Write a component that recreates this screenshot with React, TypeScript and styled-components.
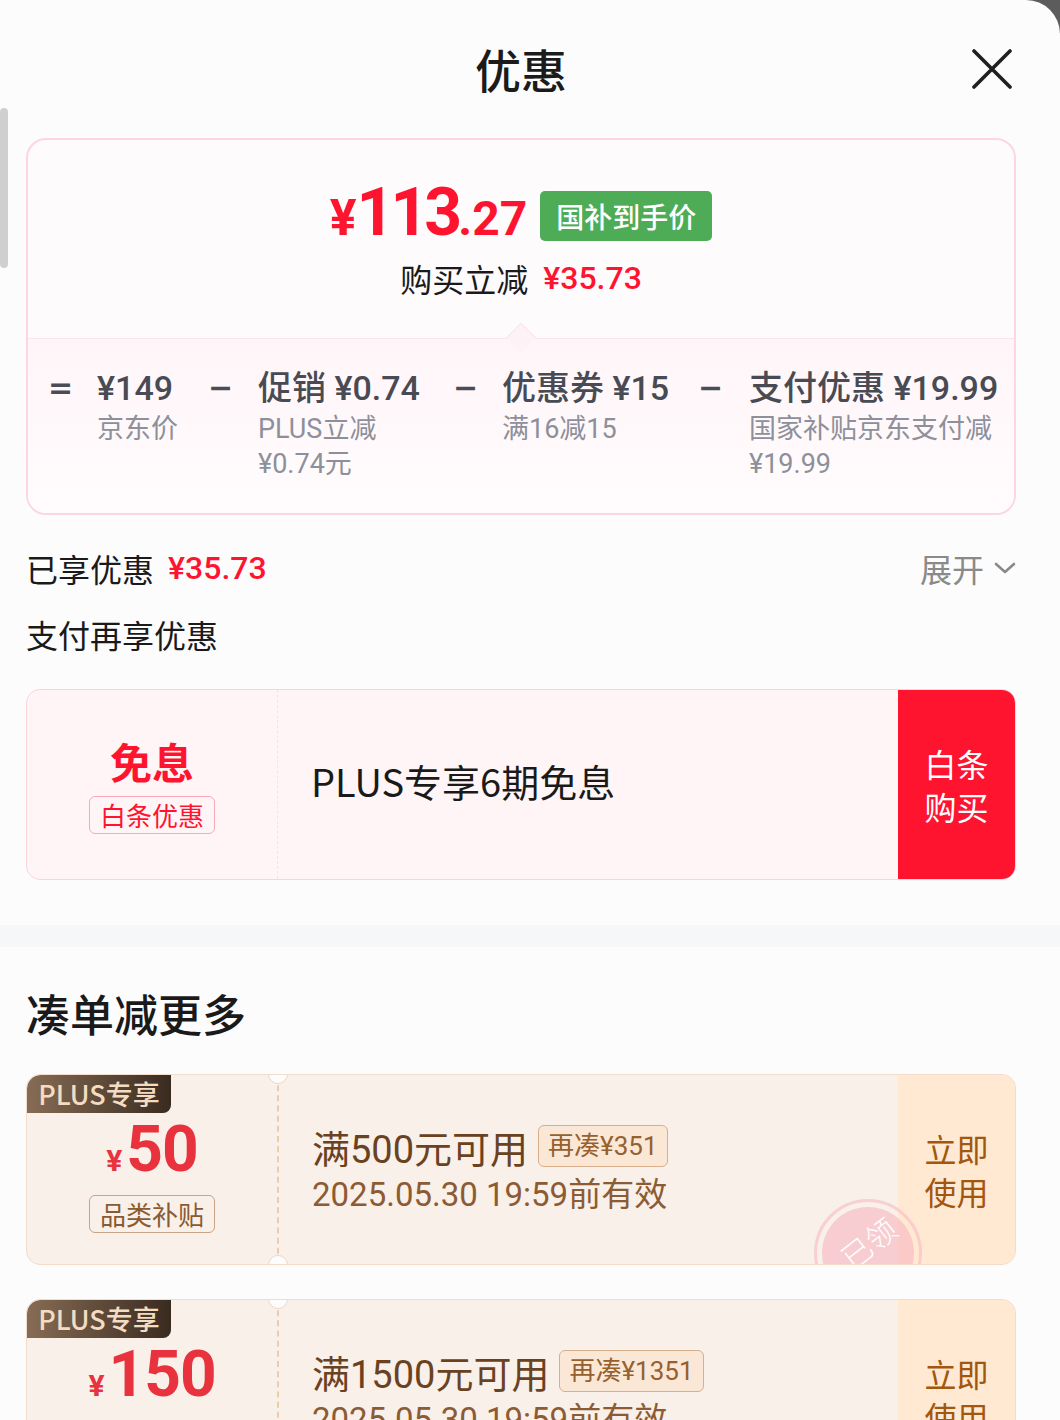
import React from 'react';
import styled, { createGlobalStyle } from 'styled-components';

const Global = createGlobalStyle`
  html, body { margin: 0; padding: 0; background: #5c5c5c; height: 1420px; overflow: hidden; }
  body { font-family: Roboto, "Noto Sans CJK SC", sans-serif; -webkit-font-smoothing: antialiased; }
  * { box-sizing: border-box; }
`;

const Sheet = styled.div`
  position: relative;
  width: 1060px;
  height: 1420px;
  background: #fcfcfd;
  border-top-right-radius: 34px;
  overflow: hidden;
`;

const ScrollThumb = styled.div`
  position: absolute;
  left: 0;
  top: 108px;
  width: 8px;
  height: 160px;
  border-radius: 4px;
  background: #cfcfcf;
`;

const Pad = styled.div`
  padding: 0 44px 0 26px;
`;

const Header = styled.header`
  height: 138px;
  display: grid;
  grid-template-columns: 1fr auto 1fr;
  align-items: center;
`;

const Title = styled.h1`
  grid-column: 2;
  margin: 0;
  font-family: "Noto Sans CJK SC", sans-serif;
  font-size: 46px;
  font-weight: 500;
  line-height: 1;
  color: #1b1b1b;
  padding-bottom: 2px;
`;

const CloseBtn = styled.button`
  grid-column: 3;
  justify-self: end;
  margin-right: 4px;
  width: 40px;
  height: 40px;
  padding: 0;
  border: 0;
  background: none;
  display: flex;
`;

const PriceCard = styled.section`
  border: 2px solid #fdd6e1;
  border-radius: 20px;
  overflow: hidden;
  background: #fdfbfc;
`;

const PriceTop = styled.div`
  position: relative;
  padding: 44px 0 38px;
  display: flex;
  flex-direction: column;
  align-items: center;
  gap: 8px;
  &::after {
    content: '';
    position: absolute;
    left: 50%;
    bottom: -10px;
    width: 20px;
    height: 20px;
    transform: translateX(-50%) rotate(45deg);
    background: #fdf3f6;
    border-top: 1px solid #fde1e8;
    border-left: 1px solid #fde1e8;
  }
`;

const PriceRow = styled.div`
  display: flex;
  align-items: center;
  height: 64px;
`;

const BigPrice = styled.div`
  display: flex;
  align-items: baseline;
  color: #ff1430;
  font-family: Roboto, sans-serif;
  font-weight: 700;
  line-height: 64px;
`;

const Yen = styled.span<{ $size: number }>`
  font-size: ${(p) => p.$size}px;
`;

const PriceInt = styled.span<{ $size: number; $ls: number }>`
  font-size: ${(p) => p.$size}px;
  letter-spacing: ${(p) => p.$ls}px;
`;

const GreenBadge = styled.span`
  margin-left: 13px;
  height: 50px;
  padding: 0 16px;
  border-radius: 5px;
  background: #4fac56;
  color: #fff;
  font-family: "Noto Sans CJK SC", sans-serif;
  font-size: 28px;
  font-weight: 500;
  line-height: 50px;
`;

const SubLine = styled.div`
  display: flex;
  align-items: center;
  gap: 15px;
  height: 44px;
  font-size: 32px;
  color: #1a1a1a;
  font-family: "Noto Sans CJK SC", sans-serif;
`;

const RedNum = styled.span<{ $weight?: number }>`
  color: #ff1430;
  font-family: Roboto, sans-serif;
  font-weight: ${(p) => p.$weight ?? 500};
`;

const Breakdown = styled.div`
  border-top: 1px solid #fde4eb;
  background: linear-gradient(#fff5f8, #fffcfd);
  padding: 27px 0 31px 20px;
  display: grid;
  grid-template-columns: 49px 111px 50px 195px 49px 196px 51px 1fr;
  align-items: start;
`;

const Op = styled.div`
  font-family: "DejaVu Sans", sans-serif;
  font-size: 30px;
  font-weight: 700;
  line-height: 44px;
  color: #4a4d55;
`;

const Item = styled.div`
  display: flex;
  flex-direction: column;
  white-space: nowrap;
`;

const ItemMain = styled.div`
  font-size: 34px;
  font-weight: 500;
  line-height: 44px;
  margin-bottom: 2px;
  color: #484b53;
`;

const ItemSub = styled.div`
  font-size: 27px;
  line-height: 35px;
  color: #8d909a;
`;

const SavedRow = styled.div`
  margin-top: 20px;
  height: 66px;
  display: flex;
  align-items: center;
  justify-content: space-between;
`;

const RowLabel = styled.div`
  display: flex;
  align-items: center;
  gap: 14px;
  font-family: "Noto Sans CJK SC", sans-serif;
  font-size: 32px;
  color: #1a1a1a;
  height: 66px;
`;

const Expand = styled.div`
  display: flex;
  align-items: center;
  gap: 10px;
  font-family: "Noto Sans CJK SC", sans-serif;
  font-size: 32px;
  color: #8a8a8a;
`;

const PayCard = styled.div`
  margin-top: 22px;
  height: 191px;
  display: flex;
  border: 1px solid #fcd3dc;
  border-radius: 14px;
  background: #fff5f7;
  overflow: hidden;
`;

const PayLeft = styled.div`
  width: 251px;
  display: flex;
  flex-direction: column;
  align-items: center;
  justify-content: center;
  gap: 9px;
  border-right: 1px dashed #fbe1e7;
`;

const PayTitle = styled.div`
  font-family: "Noto Sans CJK SC", sans-serif;
  font-size: 42px;
  font-weight: 700;
  line-height: 52px;
  color: #ff1430;
`;

const OutlineTag = styled.div<{ $border: string; $color: string }>`
  height: 38px;
  padding: 0 10px;
  border: 1px solid ${(p) => p.$border};
  border-radius: 6px;
  font-family: "Noto Sans CJK SC", sans-serif;
  font-size: 26px;
  line-height: 36px;
  color: ${(p) => p.$color};
`;

const PayMid = styled.div`
  flex: 1;
  display: flex;
  align-items: center;
  padding-left: 33px;
  padding-bottom: 8px;
  font-family: "Noto Sans CJK SC", sans-serif;
  font-size: 38px;
  color: #1a1a1a;
`;

const SideBtn = styled.div<{ $bg: string; $color: string }>`
  width: 117px;
  display: flex;
  align-items: center;
  justify-content: center;
  text-align: center;
  background: ${(p) => p.$bg};
  color: ${(p) => p.$color};
  font-family: "Noto Sans CJK SC", sans-serif;
  font-size: 32px;
  line-height: 43px;
`;

const Band = styled.div`
  margin-top: 45px;
  height: 22px;
  background: #f6f7f9;
`;

const SectionTitle = styled.h2`
  margin: 36px 0 0;
  height: 60px;
  font-family: "Noto Sans CJK SC", sans-serif;
  font-size: 44px;
  font-weight: 500;
  line-height: 60px;
  color: #1a1a1a;
`;

const CouponList = styled.div`
  margin-top: 31px;
  display: flex;
  flex-direction: column;
  gap: 34px;
`;

const Coupon = styled.div`
  position: relative;
  height: 191px;
  display: flex;
  border: 1px solid #f3dcc9;
  border-radius: 14px;
  background: #f8f0e9;
  overflow: hidden;
`;

const PlusTag = styled.div`
  position: absolute;
  left: 0;
  top: 0;
  width: 144px;
  height: 38px;
  border-radius: 14px 0 8px 0;
  background: linear-gradient(90deg, #866c54, #3a2b20);
  color: #f4dcc3;
  font-family: "Noto Sans CJK SC", sans-serif;
  font-size: 27px;
  font-weight: 500;
  line-height: 38px;
  text-align: center;
`;

const CouponLeft = styled.div`
  width: 252px;
  padding-top: 10px;
  display: flex;
  flex-direction: column;
  align-items: center;
  justify-content: center;
  gap: 12px;
  border-right: 2px dashed #ecccab;
`;

const CouponPrice = styled.div`
  display: flex;
  align-items: baseline;
  gap: 4px;
  color: #e8333f;
  font-family: Roboto, sans-serif;
  font-weight: 700;
  line-height: 66px;
  height: 66px;
`;

const Notch = styled.div<{ $pos: 'top' | 'bottom' }>`
  position: absolute;
  left: 241px;
  ${(p) => (p.$pos === 'top' ? 'top: -11px;' : 'bottom: -11px;')}
  width: 20px;
  height: 20px;
  border-radius: 50%;
  background: #fcfcfd;
  border: 1px solid #f0d6c2;
`;

const CouponMid = styled.div`
  flex: 1;
  padding-left: 33px;
  display: flex;
  flex-direction: column;
  justify-content: center;
  gap: 3px;
`;

const CouponRule = styled.div`
  display: flex;
  align-items: center;
  gap: 10px;
  height: 48px;
  font-size: 38px;
  color: #6a4222;
`;

const GapTag = styled.span`
  height: 42px;
  padding: 0 9px;
  border: 1px solid #d9ae8a;
  border-radius: 6px;
  background: #fbe7d6;
  color: #96602f;
  font-size: 26px;
  line-height: 40px;
`;

const CouponDate = styled.div`
  font-size: 33px;
  line-height: 44px;
  color: #8d5b33;
`;

const Stamp = styled.div`
  position: absolute;
  left: 787px;
  top: 124px;
  width: 108px;
  height: 108px;
  border-radius: 50%;
  border: 3px solid rgba(248, 176, 192, 0.5);
  display: flex;
  align-items: center;
  justify-content: center;
  &::before {
    content: '';
    position: absolute;
    inset: 5px;
    border-radius: 50%;
    background: rgba(248, 170, 188, 0.5);
  }
`;

const StampText = styled.span`
  position: relative;
  margin-top: -22px;
  transform: rotate(-38deg);
  color: #fff;
  font-family: "Noto Sans CJK SC", sans-serif;
  font-size: 30px;
  font-weight: 300;
`;

type Part = { main: string; sub: string[] };
const parts: Part[] = [
  { main: '¥149', sub: ['京东价'] },
  { main: '促销 ¥0.74', sub: ['PLUS立减', '¥0.74元'] },
  { main: '优惠券 ¥15', sub: ['满16减15'] },
  { main: '支付优惠 ¥19.99', sub: ['国家补贴京东支付减', '¥19.99'] },
];

type CouponData = { amount: string; rule: string; gap: string; stamp?: boolean };
const coupons: CouponData[] = [
  { amount: '50', rule: '满500元可用', gap: '再凑¥351', stamp: true },
  { amount: '150', rule: '满1500元可用', gap: '再凑¥1351' },
];

export default function App() {
  return (
    <>
      <Global />
      <Sheet>
        <ScrollThumb />
        <Pad>
          <Header>
            <Title>优惠</Title>
            <CloseBtn aria-label="关闭">
              <svg width="40" height="40" viewBox="0 0 40 40">
                <path d="M2 2 L38 38 M38 2 L2 38" stroke="#1f1f1f" strokeWidth="3.6" strokeLinecap="round" />
              </svg>
            </CloseBtn>
          </Header>

          <PriceCard>
            <PriceTop>
              <PriceRow>
                <BigPrice>
                  <Yen $size={50}>¥</Yen>
                  <PriceInt $size={66} $ls={-4}>113</PriceInt>
                  <PriceInt $size={48} $ls={0}>.27</PriceInt>
                </BigPrice>
                <GreenBadge>国补到手价</GreenBadge>
              </PriceRow>
              <SubLine>
                购买立减<RedNum>¥35.73</RedNum>
              </SubLine>
            </PriceTop>
            <Breakdown>
              {parts.map((p, i) => (
                <React.Fragment key={p.main}>
                  <Op>{i === 0 ? '=' : '−'}</Op>
                  <Item>
                    <ItemMain>{p.main}</ItemMain>
                    {p.sub.map((s) => (
                      <ItemSub key={s}>{s}</ItemSub>
                    ))}
                  </Item>
                </React.Fragment>
              ))}
            </Breakdown>
          </PriceCard>

          <SavedRow>
            <RowLabel>
              已享优惠<RedNum>¥35.73</RedNum>
            </RowLabel>
            <Expand>
              展开
              <svg width="22" height="14" viewBox="0 0 22 14">
                <path d="M2 3 L11 11 L20 3" fill="none" stroke="#8a8a8a" strokeWidth="2.6" strokeLinecap="round" strokeLinejoin="round" />
              </svg>
            </Expand>
          </SavedRow>
          <RowLabel>支付再享优惠</RowLabel>

          <PayCard>
            <PayLeft>
              <PayTitle>免息</PayTitle>
              <OutlineTag $border="#f9a9b8" $color="#ff1430">白条优惠</OutlineTag>
            </PayLeft>
            <PayMid>PLUS专享6期免息</PayMid>
            <SideBtn $bg="#ff1430" $color="#ffffff">
              白条
              <br />
              购买
            </SideBtn>
          </PayCard>
        </Pad>

        <Band />

        <Pad>
          <SectionTitle>凑单减更多</SectionTitle>
          <CouponList>
            {coupons.map((c) => (
              <Coupon key={c.amount}>
                <CouponLeft>
                  <CouponPrice>
                    <Yen $size={30}>¥</Yen>
                    <PriceInt $size={64} $ls={-1}>{c.amount}</PriceInt>
                  </CouponPrice>
                  <OutlineTag $border="#cba386" $color="#8a5a32">品类补贴</OutlineTag>
                </CouponLeft>
                <CouponMid>
                  <CouponRule>
                    {c.rule}
                    <GapTag>{c.gap}</GapTag>
                  </CouponRule>
                  <CouponDate>2025.05.30 19:59前有效</CouponDate>
                </CouponMid>
                <SideBtn $bg="#ffe9d2" $color="#a3560e">
                  立即
                  <br />
                  使用
                </SideBtn>
                <PlusTag>PLUS专享</PlusTag>
                <Notch $pos="top" />
                <Notch $pos="bottom" />
                {c.stamp && (
                  <Stamp>
                    <StampText>已领</StampText>
                  </Stamp>
                )}
              </Coupon>
            ))}
          </CouponList>
        </Pad>
      </Sheet>
    </>
  );
}
